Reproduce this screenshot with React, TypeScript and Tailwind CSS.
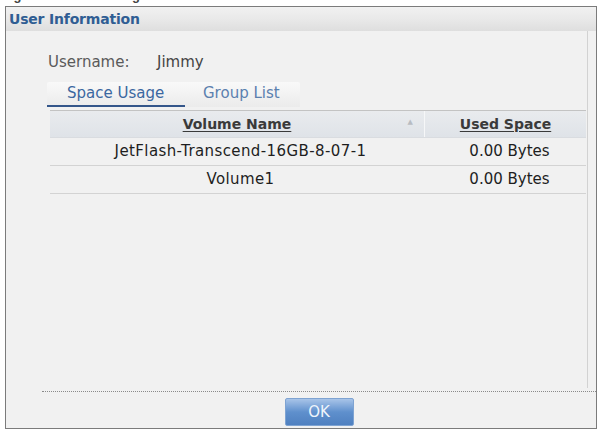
import React from "react";

const rows = [
  { name: "JetFlash-Transcend-16GB-8-07-1", used: "0.00 Bytes" },
  { name: "Volume1", used: "0.00 Bytes" },
];

export default function App() {
  return (
    <div
      className="w-[598px] h-[429px] bg-white overflow-hidden flex flex-col"
      style={{ fontFamily: '"DejaVu Sans", Verdana, sans-serif' }}
    >
      {/* caption strip above the dialog */}
      <div className="h-[6px] overflow-hidden shrink-0">
        <div
          className="-mt-[11px] ml-[2px] text-[13px] leading-[14px] font-bold text-[#444] whitespace-nowrap"
          style={{ fontFamily: '"Liberation Sans", Arial, sans-serif' }}
        >
          Figure 84 User Setting Screen: User Information
        </div>
      </div>

      {/* dialog frame */}
      <div className="ml-[5px] w-[592px] h-[423px] border border-[#7b7b7b] bg-[#f1f1f1] flex flex-col shrink-0">
        {/* title bar */}
        <div className="h-[24px] shrink-0 flex items-center pl-[3px] bg-gradient-to-b from-[#f1f1f1] via-[#e9e9e9] to-[#dedede]">
          <span className="text-[14px] font-bold text-[#2f5d93] tracking-[-0.2px]">
            User Information
          </span>
        </div>

        {/* body */}
        <div className="flex-1 flex flex-col">
          <div className="h-[357px] shrink-0 mr-[8px] border-r border-[#d2d2d2] flex flex-col">
            {/* username */}
            <div className="mt-[21px] h-[20px] flex items-center pl-[42px] text-[15px] text-[#5a5a5a]">
              <span className="w-[109px]">Username:</span>
              <span className="text-[#444]">Jimmy</span>
            </div>

            {/* tabs */}
            <div className="mt-[10px] ml-[41px] w-[253px] h-[25px] flex items-end bg-gradient-to-b from-[#f9f9f9] to-[#ebebeb] rounded-t-[2px]">
              <div className="w-[138px] h-full flex flex-col">
                <div className="flex-1 flex items-center pl-[20px] text-[15px] text-[#3a67a0]">
                  Space Usage
                </div>
                <div className="h-[3px] bg-[#34568a]" />
              </div>
              <div className="h-full flex items-center pl-[18px] pb-[3px] text-[15px] text-[#5b80af]">
                Group List
              </div>
            </div>

            {/* volume table */}
            <div className="mt-[3px] ml-[44px] mr-[1px] flex flex-col text-[15px] text-[#1e1e1e]">
              <div className="h-[28px] flex border-t border-[#c3c3c3] border-b border-b-[#d9dce0] bg-gradient-to-b from-[#e9ebee] to-[#dfe3e8]">
                <div className="relative w-[375px] flex items-center justify-center border-r border-[#f6f7f8]">
                  <span className="text-[14px] font-bold underline underline-offset-2 text-[#3a3a3a]">
                    Volume Name
                  </span>
                  <span className="absolute right-[11px] top-[6px] text-[7px] text-[#b8bcc2]">
                    ▲
                  </span>
                </div>
                <div className="flex-1 flex items-center justify-center">
                  <span className="text-[14px] font-bold underline underline-offset-2 text-[#3a3a3a]">
                    Used Space
                  </span>
                </div>
              </div>
              {rows.map((r) => (
                <div
                  key={r.name}
                  className="h-[28px] flex border-b border-[#d3d3d3]"
                >
                  <div className="w-[375px] flex items-center justify-center pl-[6px] tracking-[0.4px]">
                    {r.name}
                  </div>
                  <div className="flex-1 flex items-center justify-center pl-[8px]">
                    {r.used}
                  </div>
                </div>
              ))}
            </div>
          </div>

          {/* footer */}
          <div className="mt-[3px] ml-[36px] border-t border-dotted border-[#8a8a8a] flex justify-center">
            <button className="mt-[6px] w-[69px] h-[28px] rounded-[2px] border border-[#7ea3d2] bg-gradient-to-b from-[#a8c4e8] via-[#5f90cd] to-[#4f80c0] text-[15px] text-[#eef4fb] flex items-center justify-center">
              OK
            </button>
          </div>
        </div>
      </div>
    </div>
  );
}
